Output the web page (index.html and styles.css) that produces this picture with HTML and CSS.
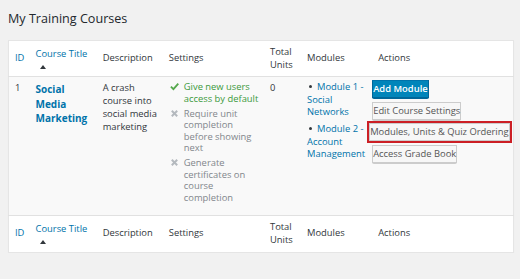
FILE: index.html
```html
<!DOCTYPE html>
<html>

<head>
  <meta charset="utf-8">
  <title>My Training Courses</title>
  <link rel="stylesheet" href="styles.css">
</head>

<body>
  <div class="wrap">
    <h1>My Training Courses</h1>

    <table class="courses">
      <colgroup>
        <col class="c-id">
        <col class="c-title">
        <col class="c-desc">
        <col class="c-settings">
        <col class="c-units">
        <col class="c-modules">
        <col class="c-actions">
      </colgroup>
      <thead>
        <tr>
          <th class="sortable">ID</th>
          <th class="sortable">Course Title<span class="sort-arrow"></span></th>
          <th>Description</th>
          <th>Settings</th>
          <th>Total<br>Units</th>
          <th>Modules</th>
          <th class="th-actions">Actions</th>
        </tr>
      </thead>
      <tbody>
        <tr>
          <td>1</td>
          <td><a class="course-name" href="#">Social Media Marketing</a></td>
          <td class="desc">A crash course into social media marketing</td>
          <td class="settings-cell">
            <ul class="settings">
              <li class="on">
                <svg class="ico" viewBox="0 0 10 10"><path d="M1 5.2 L3.8 8 L9.2 1.8" fill="none" stroke="currentColor" stroke-width="2"/></svg>
                <span>Give new users access by default</span>
              </li>
              <li class="off">
                <svg class="ico" viewBox="0 0 10 10"><path d="M2 2 L8 8 M8 2 L2 8" fill="none" stroke="currentColor" stroke-width="2.2"/></svg>
                <span>Require unit completion before showing next</span>
              </li>
              <li class="off">
                <svg class="ico" viewBox="0 0 10 10"><path d="M2 2 L8 8 M8 2 L2 8" fill="none" stroke="currentColor" stroke-width="2.2"/></svg>
                <span>Generate certificates on course completion</span>
              </li>
            </ul>
          </td>
          <td>0</td>
          <td>
            <ul class="modules">
              <li><a href="#">Module 1 - Social Networks</a></li>
              <li><a href="#">Module 2 - Account Management</a></li>
            </ul>
          </td>
          <td class="actions">
            <a class="button primary" href="#">Add Module</a>
            <a class="button" href="#">Edit Course Settings</a>
            <div class="highlight">
              <a class="button" href="#">Modules, Units &amp; Quiz Ordering</a>
            </div>
            <a class="button" href="#">Access Grade Book</a>
          </td>
        </tr>
      </tbody>
      <tfoot>
        <tr>
          <th class="sortable">ID</th>
          <th class="sortable">Course Title<span class="sort-arrow"></span></th>
          <th>Description</th>
          <th>Settings</th>
          <th>Total<br>Units</th>
          <th>Modules</th>
          <th class="th-actions">Actions</th>
        </tr>
      </tfoot>
    </table>
  </div>
</body>

</html>
```

FILE: styles.css
```css
body {
  margin: 0;
  background: #f1f1f1;
  font-family: 'Open Sans', sans-serif;
  font-size: 9.4px;
  color: #32373c;
}

a {
  color: #0073aa;
  text-decoration: none;
}

.wrap {
  padding: 0 6px 0 8px;
}

h1 {
  margin: 0;
  padding: 8px 0 10px;
  font-size: 12.6px;
  font-weight: 400;
  line-height: 22px;
  color: #23282d;
}

/*///////////////////////////////////////////////////////////////////////////*/
.courses {
  width: 506px;
  table-layout: fixed;
  border-collapse: collapse;
  background: #fff;
  border: 1px solid #e5e5e5;
  box-shadow: 0 1px 1px rgba(0, 0, 0, 0.04);
}

.c-id { width: 21px; }
.c-title { width: 67px; }
.c-desc { width: 66px; }
.c-settings { width: 101px; }
.c-units { width: 37px; }
.c-modules { width: 71px; }
.c-actions { width: 141px; }

th,
td {
  padding: 0 0 0 6px;
  text-align: left;
  vertical-align: top;
}

th {
  height: 35px;
  font-weight: 400;
  line-height: 12.5px;
  vertical-align: middle;
}

thead th {
  border-bottom: 1px solid #e1e1e1;
}

tfoot th {
  border-top: 1px solid #e1e1e1;
  height: 36px;
}

th.sortable {
  color: #0073aa;
}

.sort-arrow {
  display: block;
  width: 0;
  height: 0;
  margin: 5px 0 0 4px;
  border-left: 3px solid transparent;
  border-right: 3px solid transparent;
  border-bottom: 4px solid #32373c;
}

tbody td {
  background: #f9f9f9;
  padding-top: 4px;
  padding-bottom: 8px;
  line-height: 13px;
}

.course-name {
  display: block;
  margin-top: 1px;
  font-size: 10px;
  font-weight: 700;
  line-height: 14.5px;
  color: #0073aa;
}

.desc {
  padding-right: 4px;
}

/*///////////////////////////////////////////////////////////////////////////*/
.settings-cell {
  padding-right: 4px;
}

.settings,
.modules {
  margin: 0;
  padding: 0;
  list-style: none;
}

.settings li {
  display: flex;
  gap: 5px;
  line-height: 11.5px;
  margin-bottom: 3.5px;
}

.settings .ico {
  flex: none;
  width: 9px;
  height: 9px;
  margin: 1px 0 0 1px;
}

.settings .on {
  color: #3c9a3d;
}

.settings .on .ico {
  color: #55a84c;
}

.settings .off {
  color: #82878c;
}

.settings .off .ico {
  color: #b4b9be;
}

.modules li {
  line-height: 12.6px;
  margin-bottom: 4.5px;
}

.modules li::before {
  content: "";
  display: inline-block;
  width: 3px;
  height: 3px;
  margin: 0 5px 2px 2px;
  border-radius: 50%;
  background: #32373c;
  vertical-align: middle;
}

/*///////////////////////////////////////////////////////////////////////////*/
.actions {
  padding-left: 0;
  padding-top: 3px;
}

.button {
  display: table;
  box-sizing: border-box;
  height: 18px;
  margin-bottom: 4px;
  padding: 0 8px;
  line-height: 16px;
  white-space: nowrap;
  color: #555;
  background: #f7f7f7;
  border: 1px solid #ccc;
  border-radius: 2px;
  box-shadow: 0 1px 0 #ccc;
}

.primary {
  font-weight: 600;
  color: #fff;
  background: #0085ba;
  border-color: #0073aa #006799 #006799;
  box-shadow: 0 1px 0 #006799;
}

.highlight {
  display: table;
  margin: -3px 0 2px -5px;
  padding: 2px 2px 3px 3px;
  border: 2px solid #cc1f25;
}

.highlight .button {
  margin: 0;
}
```
